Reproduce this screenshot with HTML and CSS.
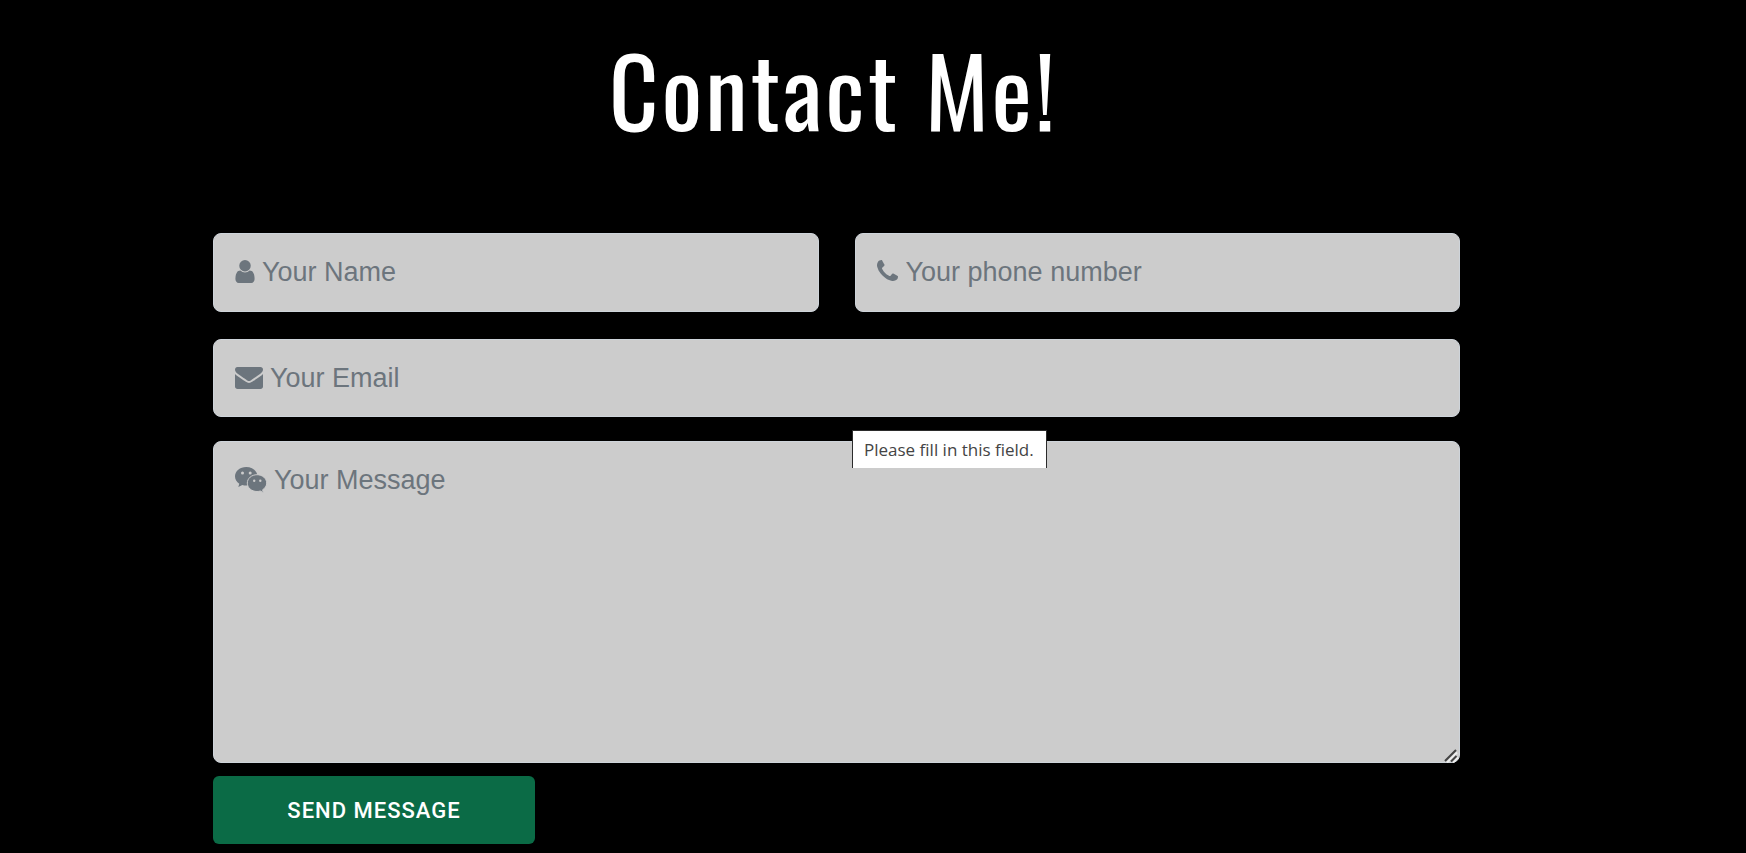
FILE: index.html
```html
<!DOCTYPE html>
<html lang="en">
<head>
<meta charset="utf-8">
<meta name="viewport" content="width=device-width, initial-scale=1">
<title>Contact Me!</title>
<link rel="stylesheet" href="styles.css">
</head>
<body>
<main class="contact">
  <h1 class="contact-title">Contact Me!</h1>
  <form class="contact-form">
    <div class="field">
      <label class="field-icon" for="name" aria-label="Your Name">
        <svg width="20" height="23" viewBox="256 128 1280 1536"><path d="M1536 1399q0 109-62.5 187t-150.5 78h-854q-88 0-150.5-78t-62.5-187q0-85 8.5-160.5t31.5-152 58.5-131 94-89 134.5-34.5q131 128 313 128t313-128q76 0 134.5 34.5t94 89 58.5 131 31.5 152 8.5 160.5zm-256-887q0 159-112.5 271.5t-271.5 112.5-271.5-112.5-112.5-271.5 112.5-271.5 271.5-112.5 271.5 112.5 112.5 271.5z"/></svg>
      </label>
      <input class="control control-name" id="name" type="text" placeholder="Your Name" required>
    </div>
    <div class="field">
      <label class="field-icon" for="phone" aria-label="Your phone number">
        <svg width="21" height="23" viewBox="192 128 1408 1536"><path d="M1600 1240q0 27-10 70.5t-21 68.5q-21 50-122 106-94 51-186 51-27 0-53-3.5t-57.5-12.5-47-14.5-55.5-20.5-49-18q-98-35-175-83-127-79-264-216t-216-264q-48-77-83-175-3-9-18-49t-20.5-55.5-14.5-47-12.5-57.5-3.5-53q0-92 51-186 56-101 106-122 25-11 68.5-21t70.5-10q14 0 21 3 18 6 53 76 11 19 30 54t35 63.5 31 53.5q3 4 17.5 25t21.5 35.5 7 28.5q0 20-28.5 50t-62 55-62 53-28.5 46q0 9 5 22.5t8.5 20.5 14 24 11.5 19q76 137 174 235t235 174q2 1 19 11.5t24 14 20.5 8.5 22.5 5q18 0 46-28.5t53-62 55-62 50-28.5q14 0 28.5 7t35.5 21.5 25 17.5q25 15 53.5 31t63.5 35 54 30q70 35 76 53 3 7 3 21z"/></svg>
      </label>
      <input class="control control-phone" id="phone" type="tel" placeholder="Your phone number" required>
    </div>
    <div class="field field-wide">
      <label class="field-icon" for="email" aria-label="Your Email">
        <svg width="28" height="22" viewBox="0 256 1792 1408"><path d="M1792 710v794q0 66-47 113t-113 47h-1472q-66 0-113-47t-47-113v-794q44 49 101 87 362 246 497 345 57 42 92.5 65.5t94.5 48 110 24.5h2q51 0 110-24.5t94.5-48 92.5-65.5q170-123 498-345 57-39 100-87zm0-294q0 79-49 151t-122 123q-376 261-468 325-10 7-42.5 31t-54 38.5-52 32.5-57.5 27-50 9h-2q-23 0-50-9t-57.5-27-52-32.5-54-38.5-42.5-31q-91-64-262-182.5t-205-142.5q-62-42-117-115.5t-55-136.5q0-78 41.5-130t118.5-52h1472q65 0 112.5 47t47.5 113z"/></svg>
      </label>
      <input class="control control-email" id="email" type="email" placeholder="Your Email" required>
    </div>
    <div class="field field-wide field-message">
      <label class="field-icon" for="message" aria-label="Your Message">
        <svg width="32" height="26" viewBox="0 0 32 26">
          <path d="M11.200 0C5 0 0 4.100 0 9.300c0 3 1.600 5.600 4.300 7.400L3.300 20l4-2c1.300.4 2.600.6 3.900.6 6.200 0 11.200-4.100 11.200-9.300S17.400 0 11.200 0z"/>
          <path class="bubble-front" d="M22 7.700c-5.400 0-9.700 3.700-9.700 8.400s4.300 8.400 9.700 8.400c1.200 0 2.300-.2 3.300-.5l3.200 1.700-.9-2.900c2.400-1.500 4.100-3.900 4.100-6.700 0-4.700-4.400-8.400-9.700-8.400z"/>
          <g class="bubble-eyes"><circle cx="7.500" cy="6" r="1.500"/><circle cx="15.200" cy="6" r="1.500"/><circle cx="19.200" cy="13.800" r="1.200"/><circle cx="25.300" cy="13.800" r="1.200"/></g>
        </svg>
      </label>
      <textarea class="control control-message" id="message" placeholder="Your Message" required></textarea>
      <svg class="grip" width="16" height="16" viewBox="0 0 16 16" aria-hidden="true">
        <path class="grip-light" d="M4 15.500L14 5.500M10 15.500L15 10.500"/>
        <path class="grip-dark" d="M2 14L13 3M8 14.500L13.500 9"/>
      </svg>
      <span class="tooltip" role="tooltip">Please fill in this field.</span>
    </div>
    <button class="send" type="submit">SEND MESSAGE</button>
  </form>
</main>
</body>
</html>
```
FILE: styles.css
```css
* {
  box-sizing: border-box;
}

body {
  margin: 0;
  background: #000;
  font-family: "Liberation Sans", Arial, sans-serif;
}

.contact {
  padding: 28px 286px 8px 213px;
}

.contact-title {
  margin: 0 6px 85px 0;
  color: #fff;
  font-family: Oswald, "Liberation Sans Narrow", sans-serif;
  font-size: 96px;
  font-weight: 400;
  line-height: 120px;
  letter-spacing: 3px;
  text-align: center;
}

.contact-form {
  display: grid;
  grid-template-columns: 1fr 1fr;
  column-gap: 36px;
}

.field {
  position: relative;
  display: flex;
  margin-bottom: 27px;
}

.field-wide {
  grid-column: 1 / -1;
  margin-bottom: 24px;
}

.field-message {
  margin-bottom: 13px;
}

.field-icon {
  position: absolute;
  top: 0;
  left: 22px;
  height: 77px;
  display: flex;
  align-items: center;
  fill: #6c757d;
}

.field-icon svg {
  display: block;
}

.bubble-front {
  stroke: #ccc;
  stroke-width: 1;
}

.bubble-eyes {
  fill: #ccc;
}

.control {
  width: 100%;
  height: 79px;
  padding: 0 20px;
  border: 1px solid #ced4da;
  border-radius: 8px;
  background: #ccc;
  color: #495057;
  font-family: inherit;
  font-size: 27px;
  line-height: 40px;
}

.control::placeholder {
  color: #6c757d;
  opacity: 1;
}

.control-name {
  padding-left: 48px;
}

.control-phone {
  padding-left: 50px;
}

.control-email {
  height: 78px;
  padding-left: 56px;
}

.control-message {
  display: block;
  height: 322px;
  padding: 18px 20px 18px 60px;
  resize: vertical;
}

.control-message::-webkit-resizer {
  background: transparent;
}

.grip {
  position: absolute;
  right: 1px;
  bottom: 0;
  fill: none;
  stroke-width: 2;
  pointer-events: none;
}

.grip-light {
  stroke: #eee;
}

.grip-dark {
  stroke: #444;
}

.tooltip {
  position: absolute;
  top: -11px;
  left: 639px;
  padding: 0 12px 0 11px;
  border: 1px solid #2b2b2b;
  border-bottom: 0;
  background: #fff;
  color: #444;
  font-family: "Segoe UI", "Open Sans", "Noto Sans", sans-serif;
  font-size: 17px;
  line-height: 37px;
  white-space: nowrap;
}

.send {
  width: 322px;
  height: 68px;
  border: 0;
  border-radius: 6px;
  background: #0b6b46;
  color: #fff;
  font-family: Roboto, sans-serif;
  font-size: 22px;
  font-weight: 500;
  letter-spacing: 1px;
}
```
